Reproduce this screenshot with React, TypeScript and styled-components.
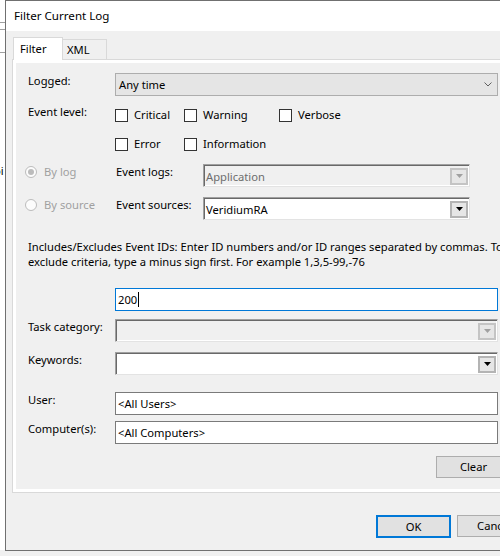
import styled, { createGlobalStyle } from 'styled-components';

const GlobalStyle = createGlobalStyle`
	html, body {
		margin: 0;
		padding: 0;
	}
	body {
		width: 500px;
		height: 556px;
		overflow: hidden;
		background: #f0f0f0;
		font-family: 'Segoe UI', 'Noto Sans', sans-serif;
		font-size: 11.2px;
		color: #000;
	}
`;

const Screen = styled.div`
	display: flex;
	width: 500px;
	height: 556px;
	overflow: hidden;
`;

const BehindApp = styled.div`
	flex: 0 0 5px;
	height: 550px;
	background: #fff;
	overflow: hidden;
	display: flex;
	flex-direction: column;
`;

const BehindLine = styled.div<{ $gap: number }>`
	margin-top: ${(p) => p.$gap}px;
	height: 1px;
	background: #a0a0a0;
`;

const BehindText = styled.div`
	margin-top: 110px;
	margin-left: -6px;
	line-height: 15px;
	white-space: nowrap;
`;

const Dialog = styled.div`
	flex: 0 0 545px;
	height: 551px;
	box-sizing: border-box;
	border: 1px solid #707070;
	background: #f0f0f0;
	display: flex;
	flex-direction: column;
`;

const TitleBar = styled.div`
	height: 30px;
	background: #fff;
	padding-left: 8px;
	padding-bottom: 1px;
	box-sizing: border-box;
	display: flex;
	align-items: center;
	font-size: 11.6px;
`;

const Body = styled.div`
	padding: 6px 0 0 6px;
	display: flex;
	flex-direction: column;
`;

const TabStrip = styled.div`
	display: flex;
	align-items: flex-end;
	height: 23px;
	padding-left: 1px;
	margin-bottom: -1px;
	position: relative;
	z-index: 1;
`;

const Tab = styled.div<{ $active?: boolean; $width: number }>`
	box-sizing: border-box;
	width: ${(p) => p.$width}px;
	height: ${(p) => (p.$active ? 23 : 20)}px;
	margin-bottom: ${(p) => (p.$active ? 0 : 1)}px;
	padding-left: ${(p) => (p.$active ? 6 : 4)}px;
	padding-bottom: 1px;
	border: 1px solid #d9d9d9;
	border-bottom: none;
	border-left: ${(p) => (p.$active ? '1px solid #d9d9d9' : 'none')};
	background: ${(p) => (p.$active ? '#fff' : '#f0f0f0')};
	display: flex;
	align-items: center;
`;

const Panel = styled.div`
	width: 531px;
	box-sizing: border-box;
	border: 1px solid #d9d9d9;
	background: #fff;
	padding: 3px;
`;

const Page = styled.div`
	background: #f0f0f0;
	padding: 10px 0 11px 12px;
	display: flex;
	flex-direction: column;
`;

const Row = styled.div<{ $gap: number }>`
	display: flex;
	align-items: flex-start;
	margin-top: ${(p) => p.$gap}px;
`;

const Label = styled.div<{ $width?: number }>`
	flex: 0 0 ${(p) => p.$width ?? 87}px;
	line-height: 15px;
	white-space: nowrap;
`;

const Combo = styled.div`
	box-sizing: border-box;
	width: 383px;
	height: 23px;
	border: 1px solid #adadad;
	background: #e5e5e5;
	padding: 0 5px 1px 3px;
	display: flex;
	align-items: center;
	justify-content: space-between;
`;

const CheckGrid = styled.div`
	margin-top: 3px;
	display: grid;
	grid-template-columns: 69px 95px auto;
	row-gap: 14px;
`;

const Check = styled.label`
	display: flex;
	align-items: center;
	gap: 6px;
	line-height: 15px;
	white-space: nowrap;
`;

const Box = styled.span`
	box-sizing: border-box;
	width: 13px;
	height: 13px;
	margin-top: 1px;
	border: 1px solid #333;
	background: #fff;
`;

const SourceRow = styled.div<{ $gap: number }>`
	display: flex;
	align-items: flex-start;
	margin-top: ${(p) => p.$gap}px;
	margin-left: -3px;
`;

const RadioOption = styled.div`
	flex: 0 0 91px;
	display: flex;
	align-items: center;
	gap: 7px;
	line-height: 15px;
	color: #a0a0a0;
	white-space: nowrap;
`;

const RadioDot = styled.span<{ $checked?: boolean }>`
	box-sizing: border-box;
	width: 12px;
	height: 12px;
	margin-top: 1px;
	border-radius: 50%;
	border: 1px solid #bcbcbc;
	background: #fcfcfc;
	display: flex;
	align-items: center;
	justify-content: center;
	&::after {
		content: '';
		display: ${(p) => (p.$checked ? 'block' : 'none')};
		width: 6px;
		height: 6px;
		border-radius: 50%;
		background: #bcbcbc;
	}
`;

const SunkenField = styled.div<{ $width: number; $disabled?: boolean }>`
	box-sizing: border-box;
	width: ${(p) => p.$width}px;
	height: 23px;
	border: 1px solid;
	border-color: #a0a0a0 #e3e3e3 #e3e3e3 #a0a0a0;
	box-shadow: inset 1px 1px 0 #696969, inset -1px -1px 0 #fff;
	background: ${(p) => (p.$disabled ? '#f0f0f0' : '#fff')};
	color: ${(p) => (p.$disabled ? '#6d6d6d' : '#000')};
	padding: 1px 1px 0 2px;
	display: flex;
	align-items: center;
	justify-content: space-between;
	line-height: 15px;
`;

const DropButton = styled.span<{ $disabled?: boolean }>`
	box-sizing: border-box;
	width: 18px;
	height: 17px;
	border: 2px solid ${(p) => (p.$disabled ? '#c4c4c4' : '#b4b4b4')};
	background: #e6e6e6;
	display: flex;
	align-items: center;
	justify-content: center;
`;

const Help = styled.div`
	margin-top: 19px;
	line-height: 15px;
	white-space: nowrap;
`;

const TextBox = styled.div<{ $focused?: boolean }>`
	box-sizing: border-box;
	width: 383px;
	height: 23px;
	border: 1px solid ${(p) => (p.$focused ? '#0078d7' : '#7a7a7a')};
	background: #fff;
	padding: 0 0 1px 2px;
	display: flex;
	align-items: center;
	white-space: nowrap;
`;

const Caret = styled.span`
	display: inline-block;
	width: 1px;
	height: 15px;
	background: #000;
	margin-left: 1px;
`;

const ClearRow = styled.div`
	display: flex;
	margin-top: 12px;
	padding-left: 408px;
`;

const Button = styled.div<{ $default?: boolean }>`
	box-sizing: border-box;
	flex: 0 0 75px;
	height: ${(p) => (p.$default ? 23 : 22)}px;
	border: ${(p) => (p.$default ? '2px solid #0078d7' : '1px solid #adadad')};
	background: #e1e1e1;
	padding-bottom: 1px;
	display: flex;
	align-items: center;
	justify-content: center;
`;

const ButtonBar = styled.div`
	display: flex;
	justify-content: flex-end;
	gap: 6px;
	margin-top: 22px;
	padding-right: 17px;
`;

const Chevron = () => (
	<svg width="8" height="5" viewBox="0 0 8 5">
		<path d="M0.5 0.5 L4 4 L7.5 0.5" fill="none" stroke="#606060" strokeWidth="1" />
	</svg>
);

const Triangle = ({ color }: { color: string }) => (
	<svg width="7" height="4" viewBox="0 0 7 4">
		<path d="M0 0 H7 L3.5 4 Z" fill={color} />
	</svg>
);

const App = () => {
	return (
		<>
			<GlobalStyle />
			<Screen>
				<BehindApp>
					<BehindLine $gap={22} />
					<BehindLine $gap={6} />
					<BehindLine $gap={22} />
					<BehindText>oi</BehindText>
				</BehindApp>
				<Dialog>
					<TitleBar>Filter Current Log</TitleBar>
					<Body>
						<TabStrip>
							<Tab $active $width={50}>Filter</Tab>
							<Tab $width={44}>XML</Tab>
						</TabStrip>
						<Panel>
							<Page>
								<Row $gap={0}>
									<Label>Logged:</Label>
									<Combo>
										<span>Any time</span>
										<Chevron />
									</Combo>
								</Row>
								<Row $gap={8}>
									<Label>Event level:</Label>
									<CheckGrid>
										<Check><Box />Critical</Check>
										<Check><Box />Warning</Check>
										<Check><Box />Verbose</Check>
										<Check><Box />Error</Check>
										<Check><Box />Information</Check>
									</CheckGrid>
								</Row>
								<SourceRow $gap={13}>
									<RadioOption><RadioDot $checked />By log</RadioOption>
									<Label>Event logs:</Label>
									<SunkenField $width={267} $disabled>
										<span>Application</span>
										<DropButton $disabled><Triangle color="#a0a0a0" /></DropButton>
									</SunkenField>
								</SourceRow>
								<SourceRow $gap={10}>
									<RadioOption><RadioDot />By source</RadioOption>
									<Label>Event sources:</Label>
									<SunkenField $width={267}>
										<span>VeridiumRA</span>
										<DropButton><Triangle color="#000" /></DropButton>
									</SunkenField>
								</SourceRow>
								<Help>
									Includes/Excludes Event IDs: Enter ID numbers and/or ID ranges separated by commas. To
									<br />
									exclude criteria, type a minus sign first. For example 1,3,5-99,-76
								</Help>
								<Row $gap={19}>
									<Label />
									<TextBox $focused>
										200<Caret />
									</TextBox>
								</Row>
								<Row $gap={8}>
									<Label>Task category:</Label>
									<SunkenField $width={383} $disabled>
										<span />
										<DropButton $disabled><Triangle color="#a0a0a0" /></DropButton>
									</SunkenField>
								</Row>
								<Row $gap={10}>
									<Label>Keywords:</Label>
									<SunkenField $width={383}>
										<span />
										<DropButton><Triangle color="#000" /></DropButton>
									</SunkenField>
								</Row>
								<Row $gap={17}>
									<Label>User:</Label>
									<TextBox>&lt;All Users&gt;</TextBox>
								</Row>
								<Row $gap={6}>
									<Label>Computer(s):</Label>
									<TextBox>&lt;All Computers&gt;</TextBox>
								</Row>
								<ClearRow>
									<Button>Clear</Button>
								</ClearRow>
							</Page>
						</Panel>
						<ButtonBar>
							<Button $default>OK</Button>
							<Button>Cancel</Button>
						</ButtonBar>
					</Body>
				</Dialog>
			</Screen>
		</>
	);
};

export default App;
